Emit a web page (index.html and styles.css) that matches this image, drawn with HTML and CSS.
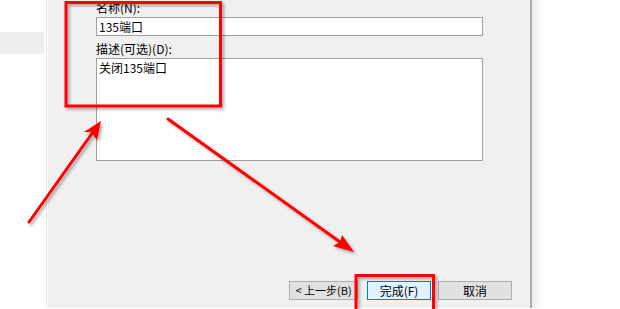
FILE: index.html
```html
<!DOCTYPE html>
<html lang="zh-CN">
<head>
  <meta charset="UTF-8">
  <title>新建入站规则向导</title>
  <link rel="stylesheet" href="styles.css">
</head>
<body>
  <div class="screen">
    <div class="sidebar">
      <div class="side-item"></div>
    </div>

    <div class="panel">
      <div class="field-label">名称(N):</div>
      <div class="textbox">135端口</div>

      <div class="field-label second">描述(可选)(D):</div>
      <div class="textbox multiline">关闭135端口</div>

      <div class="buttons">
        <div class="btn btn-back">&lt; 上一步(B)</div>
        <div class="btn btn-default">完成(F)</div>
        <div class="btn btn-cancel">取消</div>
      </div>
    </div>

    <div class="outside"></div>
  </div>

  <!-- red annotations drawn over the screenshot -->
  <svg class="marks" width="620" height="309" viewBox="0 0 620 309">
    <defs>
      <filter id="shadow" x="-20%" y="-20%" width="140%" height="140%">
        <feDropShadow dx="2" dy="2" stdDeviation="1.5" flood-color="#000" flood-opacity="0.35"/>
      </filter>
    </defs>
    <g filter="url(#shadow)" stroke="#ff0000" fill="none" stroke-width="3">
      <rect x="66" y="2.5" width="154.5" height="103.5"/>
      <rect x="356" y="275.5" width="77.5" height="40"/>
      <line x1="29" y1="222" x2="93" y2="132" stroke-linecap="round"/>
      <line x1="168" y1="119" x2="340" y2="242" stroke-linecap="round"/>
    </g>
    <g filter="url(#shadow)" fill="#ff0000">
      <polygon points="101,121 97,140 91,132 84,132"/>
      <polygon points="354,252 333,246 340,242 342,235"/>
    </g>
  </svg>
</body>
</html>
```

FILE: styles.css
```css
body {
  margin: 0;
  width: 620px;
  height: 309px;
  overflow: hidden;
  position: relative;
  background-color: #fff;
  font-family: "SimSun", "Noto Sans CJK SC", sans-serif;
  font-size: 12px;
  color: #000;
}

.screen {
  display: flex;
  height: 308px;
}

.sidebar {
  width: 46px;
  border-right: 1px solid #e6e6e6;
  margin-right: 1px;
}

.side-item {
  margin-top: 32px;
  width: 44px;
  height: 22px;
  background-color: #eeeeee;
}

.panel {
  width: 387px;
  padding: 0 47px 0 48px;
  background-color: #f0f0f0;
  border-right: 2px solid #acacac;
  display: flex;
  flex-direction: column;
}

.field-label {
  margin-top: 1px;
  height: 14px;
  line-height: 14px;
}

.field-label.second {
  margin-top: 6px;
}

.textbox {
  margin-top: 2px;
  width: 381px;
  height: 17px;
  line-height: 17px;
  padding: 0 2px;
  background-color: #fff;
  border: 1px solid #a0a0a0;
}

.textbox.multiline {
  height: 99px;
  padding-top: 2px;
  line-height: 14px;
}

.buttons {
  margin-top: auto;
  margin-bottom: 8px;
  margin-right: -29px;
  display: flex;
  justify-content: flex-end;
}

.btn {
  width: 67px;
  height: 17px;
  line-height: 17px;
  text-align: center;
  white-space: nowrap;
  background-color: #e1e1e1;
  border: 1px solid #adadad;
}

.btn-back {
  font-size: 11px;
}

.btn-default {
  width: 62px;
  margin-left: 9px;
  background-color: #e5f1fb;
  border-color: #0078d7;
}

.btn-cancel {
  width: 72px;
  margin-left: 7px;
}

.outside {
  flex: 1;
  background: linear-gradient(to right, #e9e9e9, #fbfbfb 8px, #fff 16px);
}

.marks {
  position: absolute;
  left: 0;
  top: 0;
}
```
